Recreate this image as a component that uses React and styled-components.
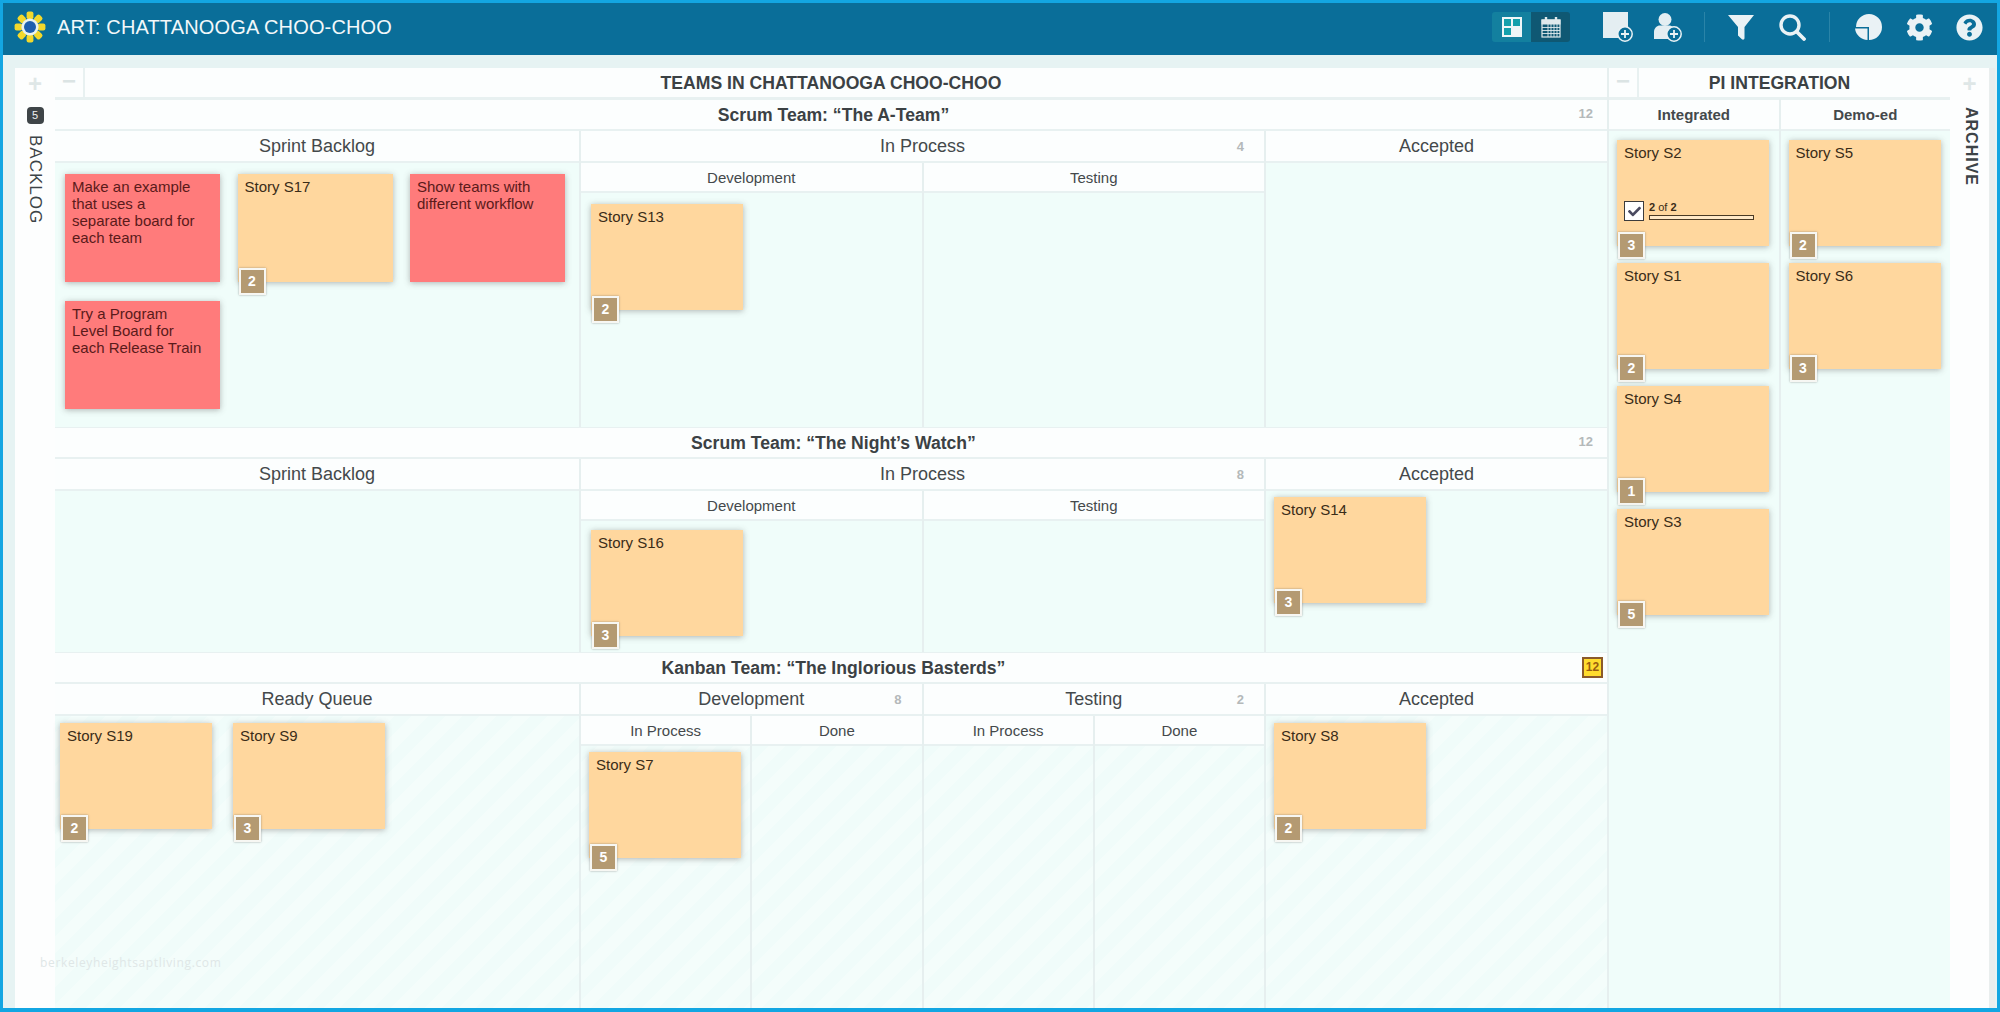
import styled, { createGlobalStyle } from "styled-components";
import { FaCog, FaQuestionCircle, FaCheck } from "react-icons/fa";

const GlobalStyle = createGlobalStyle`
  html, body {
    margin: 0;
    padding: 0;
    font-family: "Liberation Sans", Arial, sans-serif;
  }
  * {
    box-sizing: border-box;
  }
`;

const Frame = styled.div`
  width: 2000px;
  height: 1012px;
  border: 3px solid #13a6e2;
  border-bottom-width: 4px;
  background-color: #e6f3f3;
  display: flex;
  flex-direction: column;
  overflow: hidden;
  position: relative;
`;

const TopBar = styled.header`
  height: 52px;
  flex: none;
  background-color: #0a6e99;
  display: flex;
  align-items: center;
  padding: 0 0 4px 11px;
  color: #fff;
`;

const AppTitle = styled.div`
  font-size: 20px;
  letter-spacing: 0.15px;
  margin-left: 11px;
  color: #f2f8fa;
`;

const TopActions = styled.div`
  margin-left: auto;
  display: flex;
  align-items: center;
  padding-right: 13px;
`;

const Toggle = styled.div`
  display: flex;
  height: 30px;
  margin-right: 33px;
`;

const ToggleBtn = styled.div`
  width: 39px;
  display: flex;
  align-items: center;
  justify-content: center;
  background-color: ${(props) => (props.$active ? "#13809f" : "#0f5873")};
  border-radius: ${(props) => (props.$active ? "3px 0 0 3px" : "0 3px 3px 0")};
`;

const IconBtn = styled.div`
  width: 30px;
  height: 30px;
  display: flex;
  align-items: center;
  justify-content: center;
  margin-left: ${(props) => props.$gap || 0}px;
  color: #eaf2f5;
`;

const BarDivider = styled.div`
  width: 1px;
  height: 30px;
  background-color: #2a84a8;
  margin-left: ${(props) => props.$gap}px;
`;

const Board = styled.div`
  flex: 1;
  min-height: 0;
  display: flex;
  padding: 13px 7px 0 12px;
`;

const SideRail = styled.aside`
  width: ${(props) => props.$w}px;
  flex: none;
  background-color: #fdfefe;
  display: flex;
  flex-direction: column;
  align-items: center;
  color: #d8e2e2;
  border-right: ${(props) => (props.$right ? "6px solid #e9eeee" : "none")};
`;

const PlusMark = styled.div`
  font-size: 24px;
  font-weight: 700;
  line-height: 31px;
  height: 39px;
  color: #dfe7e7;
`;

const CountChip = styled.div`
  width: 17px;
  height: 17px;
  border-radius: 4px;
  background-color: #3f4548;
  color: #f0f0f0;
  font-size: 11px;
  line-height: 17px;
  text-align: center;
  margin-bottom: 11px;
`;

const RailLabel = styled.div`
  writing-mode: vertical-rl;
  font-size: ${(props) => (props.$bold ? 16 : 17)}px;
  font-weight: ${(props) => (props.$bold ? 700 : 400)};
  letter-spacing: 1px;
  color: #3d4447;
  margin-left: ${(props) => (props.$bold ? 3 : 0)}px;
`;

const Main = styled.main`
  flex: none;
  width: 1552px;
  display: flex;
  flex-direction: column;
`;

const TitleRow = styled.div`
  height: 31px;
  flex: none;
  display: flex;
  background-color: #fcfefe;
  border-bottom: 2px solid #e8f1f1;
`;

const MinusCell = styled.div`
  width: 30px;
  flex: none;
  border-right: 2px solid #e8f1f1;
  color: #dbe4e4;
  font-size: 24px;
  font-weight: 700;
  line-height: 26px;
  text-align: center;
`;

const TitleText = styled.div`
  flex: 1;
  text-align: center;
  font-size: 17.6px;
  font-weight: 700;
  line-height: 30px;
  color: #3b4144;
  padding-right: ${(props) => props.$shift || 0}px;
`;

const Team = styled.section`
  display: flex;
  flex-direction: column;
  flex: ${(props) => (props.$h ? "none" : 1)};
  height: ${(props) => (props.$h ? `${props.$h}px` : "auto")};
  min-height: 0;
`;

const TeamBar = styled.div`
  height: 32px;
  flex: none;
  position: relative;
  background-color: #fcfefe;
  border-bottom: 2px solid #e8f1f1;
  border-top: 1px solid #e8f1f1;
  padding-left: 5px;
  text-align: center;
  font-size: 17.6px;
  font-weight: 700;
  line-height: 30px;
  color: #3b4144;
`;

const TeamCount = styled.span`
  position: absolute;
  right: 14px;
  top: -1px;
  font-size: 13px;
  color: #b4b9ba;
`;

const LimitChip = styled.span`
  position: absolute;
  right: 4px;
  top: 4px;
  width: 21px;
  height: 21px;
  background-color: #ffdc2e;
  border: 2px solid #8b5a2b;
  color: #9a5c10;
  font-size: 12px;
  line-height: 17px;
`;

const Lane = styled.div`
  flex: 1;
  min-height: 0;
  display: grid;
  grid-template-columns: 526px 685px 341px;
`;

const Column = styled.div`
  display: flex;
  flex-direction: column;
  min-height: 0;
  border-right: 2px solid #e6efef;
  &:last-child {
    border-right: none;
  }
`;

const ColHead = styled.div`
  height: ${(props) => (props.$small ? 30 : 32)}px;
  flex: none;
  position: relative;
  background-color: #fcfefe;
  border-bottom: 2px solid #e8f1f1;
  text-align: center;
  font-size: ${(props) => (props.$small ? 15 : 18)}px;
  line-height: ${(props) => (props.$small ? 29 : 31)}px;
  color: #44494b;
`;

const ColCount = styled.span`
  position: absolute;
  right: 20px;
  top: 0;
  font-size: 13px;
  font-weight: 700;
  color: #b4b9ba;
`;

const SubCols = styled.div`
  flex: 1;
  min-height: 0;
  display: flex;
`;

const SubCol = styled(Column)`
  flex: 1;
  min-width: 0;
`;

const Body = styled.div`
  flex: 1;
  min-height: 0;
  display: flex;
  flex-wrap: wrap;
  align-content: flex-start;
  gap: ${(props) => props.$gap || "19px"};
  padding: ${(props) => props.$pad || "11px 10px"};
  background: ${(props) =>
    props.$striped
      ? "repeating-linear-gradient(135deg, #f0fcfa 0 12px, #f4fdfb 12px 24px)"
      : "#f0fdfa"};
`;

const CardBox = styled.div`
  position: relative;
  width: ${(props) => props.$w || 152}px;
  height: ${(props) => props.$h || 106}px;
  padding: 4px ${(props) => (props.$red ? 17 : 7)}px 4px 7px;
  background-color: ${(props) => (props.$red ? "#ff7b7b" : "#ffd79e")};
  box-shadow: 0 1px 6px rgba(90, 90, 90, 0.45);
  font-size: 15px;
  line-height: 17px;
  color: ${(props) => (props.$red ? "#5a1a1a" : "#3a2c18")};
`;

const Points = styled.div`
  position: absolute;
  left: 1px;
  bottom: -13px;
  width: 27px;
  height: 27px;
  background-color: #b49a72;
  border: 2px solid #f7f7f3;
  box-shadow: 0 0 2px rgba(80, 80, 80, 0.5);
  color: #fff;
  font-size: 14px;
  font-weight: 700;
  line-height: 23px;
  text-align: center;
`;

const TaskRow = styled.div`
  position: absolute;
  left: 7px;
  bottom: 25px;
  display: flex;
  align-items: flex-end;
  gap: 5px;
`;

const TaskCheck = styled.div`
  width: 20px;
  height: 20px;
  background-color: #fff;
  border: 1.5px solid #3c3c3c;
  display: flex;
  align-items: center;
  justify-content: center;
  color: #4a4a60;
`;

const TaskInfo = styled.div`
  font-size: 11px;
  line-height: 11px;
  color: #3a2c18;
`;

const TaskBar = styled.div`
  width: 105px;
  height: 5px;
  margin-top: 2px;
  margin-bottom: 1px;
  background-color: #ffe9c8;
  border: 1px solid #4a3a24;
`;

const PiPanel = styled.div`
  width: 343px;
  flex: none;
  display: flex;
  flex-direction: column;
  border-left: 2px solid #e6efef;
`;

const PiColumns = styled.div`
  flex: 1;
  min-height: 0;
  display: flex;
`;

const PiColumn = styled.div`
  flex: 1;
  min-width: 0;
  display: flex;
  flex-direction: column;
  border-right: 2px solid #e6efef;
  &:last-child {
    border-right: none;
  }
`;

const PiHead = styled.div`
  height: 32px;
  flex: none;
  background-color: #fcfefe;
  border-bottom: 2px solid #e8f1f1;
  border-top: 1px solid #e8f1f1;
  text-align: center;
  font-size: 15px;
  font-weight: 700;
  line-height: 29px;
  color: #44494b;
`;

const PiBody = styled.div`
  flex: 1;
  min-height: 0;
  background-color: #f0fdfa;
  padding: 9px 8px;
  display: flex;
  flex-direction: column;
  gap: 17px;
`;

const Watermark = styled.div`
  position: absolute;
  left: 37px;
  top: 951px;
  font-family: "Open Sans", sans-serif;
  font-size: 12px;
  letter-spacing: 0.65px;
  color: #dfe7e7;
`;

const Logo = () => (
  <svg width="32" height="32" viewBox="0 0 32 32">
    {[0, 45, 90, 135, 180, 225, 270, 315].map((angle) => (
      <rect
        key={angle}
        x="12.6"
        y="0.6"
        width="6.8"
        height="7.6"
        rx="2"
        fill="#f3d92c"
        transform={`rotate(${angle} 16 16)`}
      />
    ))}
    <circle cx="16" cy="16" r="8.6" fill="#eaf3ee" />
    <circle cx="16" cy="16" r="6" fill="#1f5fae" />
  </svg>
);

const BoardIcon = () => (
  <svg width="22" height="22" viewBox="0 0 22 22">
    <rect x="1" y="1" width="20" height="20" fill="#eef6f8" />
    <rect x="3" y="3" width="7" height="7" fill="#13a0ac" />
    <rect x="12" y="3" width="7" height="7" fill="#13a0ac" />
    <rect x="3" y="12" width="7" height="7" fill="#13a0ac" />
  </svg>
);

const CalendarIcon = () => (
  <svg width="20" height="22" viewBox="0 0 20 22" fill="none" stroke="#dfe9ec">
    <rect x="1" y="4" width="18" height="17" strokeWidth="1.2" />
    <rect x="1" y="4" width="18" height="4" fill="#dfe9ec" />
    <path d="M5 1v5M15 1v5" strokeWidth="2.4" />
    <path d="M7 8v13M10 8v13M13 8v13M16 8v13M1 11.5h18M1 14.5h18M1 17.5h18" strokeWidth="0.9" />
  </svg>
);

const PlusBadge = ({ cx, cy }) => (
  <g>
    <circle cx={cx} cy={cy} r="7.2" fill="#0a6e99" stroke="#eaf2f5" strokeWidth="1.5" />
    <path d={`M${cx - 4} ${cy}h8M${cx} ${cy - 4}v8`} stroke="#eaf2f5" strokeWidth="1.8" />
  </g>
);

const NewCardIcon = () => (
  <svg width="30" height="30" viewBox="0 0 30 30">
    <rect x="0" y="0" width="25" height="26" fill="#e4eef2" />
    <PlusBadge cx={22} cy={22} />
  </svg>
);

const NewUserIcon = () => (
  <svg width="30" height="30" viewBox="0 0 30 30">
    <circle cx="12" cy="7.5" r="6.5" fill="#e4eef2" />
    <path d="M1 27v-7c0-4 3-6.5 6-6.5h9c3 0 6 2.5 6 6.5v7z" fill="#e4eef2" />
    <PlusBadge cx={21} cy={22} />
  </svg>
);

const FunnelIcon = () => (
  <svg width="28" height="28" viewBox="0 0 28 28">
    <path d="M1 2h26L17.5 14v11c0 1.5-1.5 2.2-2.6 1.2L11 22.5V14z" fill="#eaf2f5" />
  </svg>
);

const SearchIcon = () => (
  <svg width="28" height="28" viewBox="0 0 28 28" fill="none" stroke="#eaf2f5">
    <circle cx="12" cy="12" r="9" strokeWidth="3.4" />
    <path d="M18.5 18.5L26 26" strokeWidth="3.8" strokeLinecap="round" />
  </svg>
);

const ReportIcon = () => (
  <svg width="28" height="28" viewBox="0 0 28 28">
    <path d="M14 1a13 13 0 1 1 0 26v-13H1A13 13 0 0 1 14 1z" fill="#eaf2f5" />
    <path d="M0 15.5h12.5V27A13 13 0 0 1 0 15.5z" fill="#eaf2f5" />
  </svg>
);

const Card = ({ title, points, red, w, h, task }) => (
  <CardBox $red={red} $w={w} $h={h}>
    {title}
    {task && (
      <TaskRow>
        <TaskCheck>
          <FaCheck size={13} />
        </TaskCheck>
        <TaskInfo>
          <b>2</b> of <b>2</b>
          <TaskBar />
        </TaskInfo>
      </TaskRow>
    )}
    {points && <Points>{points}</Points>}
  </CardBox>
);

const App = () => {
  const integrated = [
    { id: "S2", points: 3, task: true },
    { id: "S1", points: 2 },
    { id: "S4", points: 1 },
    { id: "S3", points: 5 },
  ];
  const demoed = [
    { id: "S5", points: 2 },
    { id: "S6", points: 3 },
  ];

  return (
    <Frame>
      <GlobalStyle />
      <TopBar>
        <Logo />
        <AppTitle>ART: CHATTANOOGA CHOO-CHOO</AppTitle>
        <TopActions>
          <Toggle>
            <ToggleBtn $active>
              <BoardIcon />
            </ToggleBtn>
            <ToggleBtn>
              <CalendarIcon />
            </ToggleBtn>
          </Toggle>
          <IconBtn>
            <NewCardIcon />
          </IconBtn>
          <IconBtn $gap={20}>
            <NewUserIcon />
          </IconBtn>
          <BarDivider $gap={21} />
          <IconBtn $gap={21}>
            <FunnelIcon />
          </IconBtn>
          <IconBtn $gap={21}>
            <SearchIcon />
          </IconBtn>
          <BarDivider $gap={22} />
          <IconBtn $gap={24}>
            <ReportIcon />
          </IconBtn>
          <IconBtn $gap={20}>
            <FaCog size={27} />
          </IconBtn>
          <IconBtn $gap={20}>
            <FaQuestionCircle size={27} />
          </IconBtn>
        </TopActions>
      </TopBar>

      <Board>
        <SideRail $w={40}>
          <PlusMark>+</PlusMark>
          <CountChip>5</CountChip>
          <RailLabel>BACKLOG</RailLabel>
        </SideRail>

        <Main>
          <TitleRow>
            <MinusCell>−</MinusCell>
            <TitleText $shift={30}>TEAMS IN CHATTANOOGA CHOO-CHOO</TitleText>
          </TitleRow>

          <Team $h={328}>
            <TeamBar>
              Scrum Team: “The A-Team”
              <TeamCount>12</TeamCount>
            </TeamBar>
            <Lane>
              <Column>
                <ColHead>Sprint Backlog</ColHead>
                <Body $gap="19px 17.5px">
                  <Card title="Make an example that uses a separate board for each team" red w={155} h={108} />
                  <Card title="Story S17" points={2} w={155} h={108} />
                  <Card title="Show teams with different workflow" red w={155} h={108} />
                  <Card title="Try a Program Level Board for each Release Train" red w={155} h={108} />
                </Body>
              </Column>
              <Column>
                <ColHead>
                  In Process
                  <ColCount>4</ColCount>
                </ColHead>
                <SubCols>
                  <SubCol>
                    <ColHead $small>Development</ColHead>
                    <Body>
                      <Card title="Story S13" points={2} />
                    </Body>
                  </SubCol>
                  <SubCol>
                    <ColHead $small>Testing</ColHead>
                    <Body />
                  </SubCol>
                </SubCols>
              </Column>
              <Column>
                <ColHead>Accepted</ColHead>
                <Body />
              </Column>
            </Lane>
          </Team>

          <Team $h={225}>
            <TeamBar>
              Scrum Team: “The Night’s Watch”
              <TeamCount>12</TeamCount>
            </TeamBar>
            <Lane>
              <Column>
                <ColHead>Sprint Backlog</ColHead>
                <Body />
              </Column>
              <Column>
                <ColHead>
                  In Process
                  <ColCount>8</ColCount>
                </ColHead>
                <SubCols>
                  <SubCol>
                    <ColHead $small>Development</ColHead>
                    <Body $pad="9px 10px">
                      <Card title="Story S16" points={3} />
                    </Body>
                  </SubCol>
                  <SubCol>
                    <ColHead $small>Testing</ColHead>
                    <Body />
                  </SubCol>
                </SubCols>
              </Column>
              <Column>
                <ColHead>Accepted</ColHead>
                <Body $pad="6px 8px">
                  <Card title="Story S14" points={3} />
                </Body>
              </Column>
            </Lane>
          </Team>

          <Team>
            <TeamBar>
              Kanban Team: “The Inglorious Basterds”
              <LimitChip>12</LimitChip>
            </TeamBar>
            <Lane>
              <Column>
                <ColHead>Ready Queue</ColHead>
                <Body $striped $pad="7px 5px" $gap="21px">
                  <Card title="Story S19" points={2} />
                  <Card title="Story S9" points={3} />
                </Body>
              </Column>
              <Column>
                <SubCols>
                  <SubCol>
                    <ColHead>
                      Development
                      <ColCount>8</ColCount>
                    </ColHead>
                    <SubCols>
                      <SubCol>
                        <ColHead $small>In Process</ColHead>
                        <Body $striped $pad="6px 8px">
                          <Card title="Story S7" points={5} />
                        </Body>
                      </SubCol>
                      <SubCol>
                        <ColHead $small>Done</ColHead>
                        <Body $striped />
                      </SubCol>
                    </SubCols>
                  </SubCol>
                  <SubCol>
                    <ColHead>
                      Testing
                      <ColCount>2</ColCount>
                    </ColHead>
                    <SubCols>
                      <SubCol>
                        <ColHead $small>In Process</ColHead>
                        <Body $striped />
                      </SubCol>
                      <SubCol>
                        <ColHead $small>Done</ColHead>
                        <Body $striped />
                      </SubCol>
                    </SubCols>
                  </SubCol>
                </SubCols>
              </Column>
              <Column>
                <ColHead>Accepted</ColHead>
                <Body $striped $pad="7px 8px">
                  <Card title="Story S8" points={2} />
                </Body>
              </Column>
            </Lane>
          </Team>
        </Main>

        <PiPanel>
          <TitleRow>
            <MinusCell>−</MinusCell>
            <TitleText $shift={30}>PI INTEGRATION</TitleText>
          </TitleRow>
          <PiColumns>
            <PiColumn>
              <PiHead>Integrated</PiHead>
              <PiBody>
                {integrated.map((card) => (
                  <Card key={card.id} title={`Story ${card.id}`} points={card.points} task={card.task} />
                ))}
              </PiBody>
            </PiColumn>
            <PiColumn>
              <PiHead>Demo-ed</PiHead>
              <PiBody>
                {demoed.map((card) => (
                  <Card key={card.id} title={`Story ${card.id}`} points={card.points} />
                ))}
              </PiBody>
            </PiColumn>
          </PiColumns>
        </PiPanel>

        <SideRail $w={45} $right>
          <PlusMark>+</PlusMark>
          <RailLabel $bold>ARCHIVE</RailLabel>
        </SideRail>
      </Board>
      <Watermark>berkeleyheightsaptliving.com</Watermark>
    </Frame>
  );
};

export default App;
